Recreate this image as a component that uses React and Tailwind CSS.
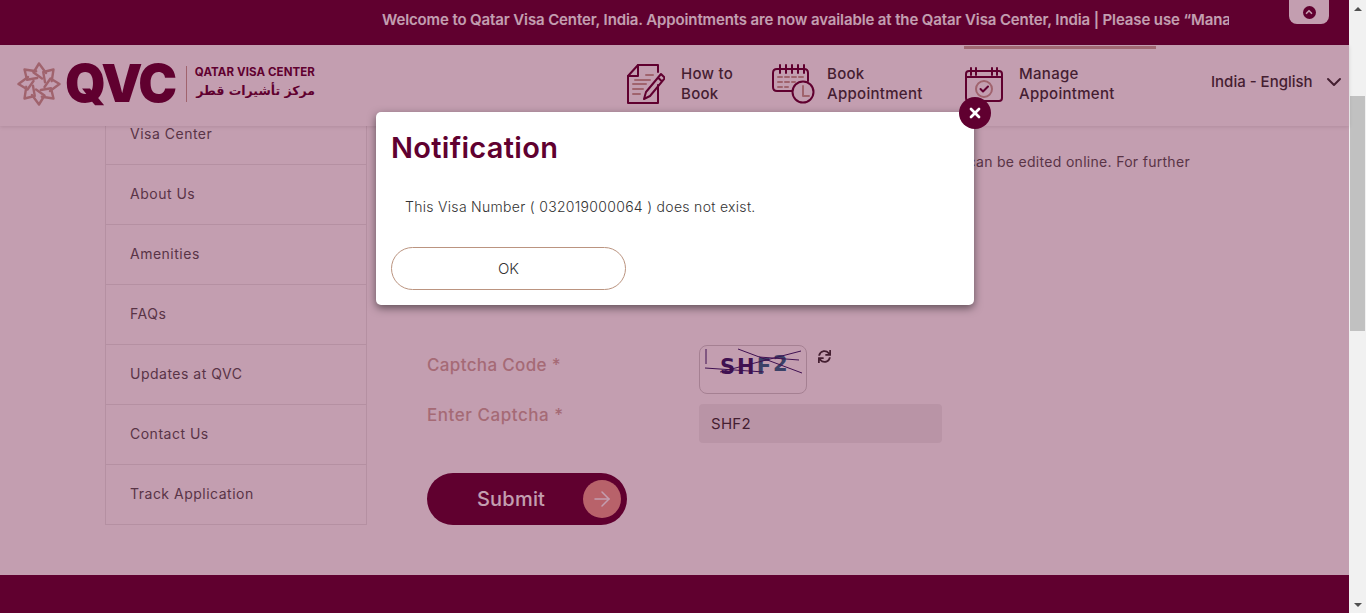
import { ChevronDown, ChevronUp, ArrowRight, X } from 'lucide-react'
import { FaSync } from 'react-icons/fa'

const font = { fontFamily: 'Inter, "Noto Sans", sans-serif' }

const sideLinks = ['About Us', 'Amenities', 'FAQs', 'Updates at QVC', 'Contact Us', 'Track Application']

function Rosette() {
  const arms = [0, 45, 90, 135, 180, 225, 270, 315]
  return (
    <svg width="44" height="44" viewBox="0 0 44 44" fill="none" stroke="#c7a094" strokeWidth="2.4" strokeLinejoin="round" strokeLinecap="round">
      {arms.map((a) => (
        <g key={a} transform={`rotate(${a} 22 22)`}>
          <path d="M22 1.5 L16.5 10.5 L25 16.5 M22 1.5 L29 11" />
        </g>
      ))}
    </svg>
  )
}

function DocIcon() {
  return (
    <svg width="38" height="40" viewBox="0 0 38 40" fill="none" strokeWidth="2" strokeLinecap="round" strokeLinejoin="round">
      <path d="M31 21 V39 H1 V12 L11 1 H31 V8" stroke="#600030" />
      <path d="M1 12 H11 V1" stroke="#600030" />
      <path d="M19 11 H26 M8 16 H23 M6 20 H19 M6 25 H16 M6 30 H13" stroke="#c7a094" />
      <path d="M34 10 L38 14 L23 32 L17 35 L19 28 Z M31 13.5 L35 17.5" stroke="#600030" />
    </svg>
  )
}

function CalendarClockIcon() {
  return (
    <svg width="44" height="40" viewBox="0 0 44 40" fill="none" strokeWidth="2" strokeLinecap="round" strokeLinejoin="round">
      <path d="M20 27 H5 Q1 27 1 23 V9 Q1 5 5 5 H32 Q36 5 36 9 V17" stroke="#600030" />
      <path d="M8 1 V9 M14 1 V9 M20 1 V9 M26 1 V9 M32 1 V9" stroke="#600030" />
      <path d="M6 13 H10 M13 13 H17 M20 13 H24 M27 13 H31 M6 18 H10 M13 18 H17 M20 18 H23 M6 23 H10 M13 23 H16" stroke="#c7a094" />
      <circle cx="31" cy="28" r="10.5" stroke="#600030" />
      <path d="M31 22 V32 H37" stroke="#c7a094" />
    </svg>
  )
}

function CalendarCheckIcon() {
  return (
    <svg width="38" height="35" viewBox="0 0 38 35" fill="none" strokeWidth="2" strokeLinecap="round" strokeLinejoin="round">
      <path d="M4 4 H34 Q37 4 37 7 V31 Q37 34 34 34 H4 Q1 34 1 31 V7 Q1 4 4 4 Z" stroke="#600030" />
      <path d="M1 10 H37 M6 1 V8 M11 1 V8 M27 1 V8 M32 1 V8" stroke="#600030" />
      <circle cx="19" cy="22" r="8" stroke="#c7a094" />
      <path d="M15.5 22 L18 24.5 L23 19.5" stroke="#600030" />
    </svg>
  )
}

function NavItem({ icon, line1, line2, active, width }) {
  return (
    <div className={`${width} h-[80px] mt-px flex items-center pb-[7px] border-t-[3px] ${active ? 'border-[#c7a89b]' : 'border-transparent'}`}>
      <div className="flex items-center">
        {icon}
        <div className="text-[15px] leading-5 font-medium tracking-[0.3px] text-[#333333]">
          <div>{line1}</div>
          <div>{line2}</div>
        </div>
      </div>
    </div>
  )
}

function Captcha() {
  return (
    <div className="relative w-[108px] h-[49px] border border-[#cfcfcf] rounded-lg overflow-hidden">
      <div className="pl-[20px] pt-[7px] text-[21px] leading-[28px] font-extrabold tracking-[2px] whitespace-nowrap" style={{ fontFamily: '"DejaVu Sans", sans-serif' }}>
        <span className="text-[#2a1a66]">SH</span>
        <span className="text-[#24698a]">F</span>
        <span className="inline-block -translate-y-[3px] text-[#24698a]">2</span>
      </div>
      <svg className="absolute inset-0" width="108" height="49" fill="none" stroke="#2a1a66" strokeWidth="1">
        <path d="M6 3 V18 M5 22 L64 26 M38 3 L102 27 M20 26 L101 5 M59 11 L99 14" />
      </svg>
    </div>
  )
}

export default function App() {
  return (
    <div className="h-[613px] flex overflow-hidden bg-white" style={font}>
      <div className="relative w-[1349px] h-full flex flex-col">
        {/* Announcement bar */}
        <div className="h-[45px] bg-[#600030] flex shrink-0">
          <div className="ml-[382px] w-[847px] h-[41px] flex items-center overflow-hidden">
            <span className="text-[15px] font-semibold text-white whitespace-nowrap tracking-[-0.12px]">
              Welcome to Qatar Visa Center, India. Appointments are now available at the Qatar Visa Center, India | Please use “Manage Appointment”
            </span>
          </div>
          <div className="ml-[60px] w-[40px] h-[24px] bg-white rounded-b-lg flex items-center justify-center">
            <span className="w-[13px] h-[13px] rounded-full bg-[#600030] flex items-center justify-center">
              <ChevronUp size={10} strokeWidth={4} className="text-white" />
            </span>
          </div>
        </div>

        {/* Header */}
        <div className="relative z-10 h-[81px] bg-white shadow-[0_1px_4px_rgba(0,0,0,0.12)] flex shrink-0">
          <div className="w-[625px] flex items-center pl-[17px] pb-[4px]">
            <Rosette />
            <span className="ml-[4px] text-[52px] leading-none font-black tracking-[-2.2px] text-[#600030]">QVC</span>
            <div className="ml-[11px] pl-[8px] border-l border-[#c7a094] h-[36px] flex flex-col justify-center">
              <div className="text-[11.5px] leading-[13px] font-bold text-[#600030] tracking-[0.1px] whitespace-nowrap">QATAR VISA CENTER</div>
              <div dir="rtl" className="text-[12.5px] leading-[23px] font-bold text-[#600030] whitespace-nowrap" style={{ fontFamily: '"DejaVu Sans", sans-serif' }}>مركز تأشيرات قطر</div>
            </div>
          </div>
          <NavItem width="w-[147px]" line1="How to" line2="Book" icon={<span className="ml-[2px] mr-[16px] flex"><DocIcon /></span>} />
          <NavItem width="w-[192px]" line1="Book" line2="Appointment" icon={<span className="mr-[11px] flex"><CalendarClockIcon /></span>} />
          <NavItem width="w-[192px]" active line1="Manage" line2="Appointment" icon={<span className="ml-px mr-[16px] flex"><CalendarCheckIcon /></span>} />
          <div className="ml-[55px] flex items-center pb-[7px] text-[15px] font-medium tracking-[0px] text-[#333333] whitespace-nowrap">
            India - English
            <ChevronDown size={24} strokeWidth={2} className="ml-[9px]" />
          </div>
        </div>

        {/* Page content */}
        <div className="flex-1 flex min-h-0 pl-[105px]">
          <div className="w-[262px] h-[399px] border-l border-r border-[#e8e8e8] shrink-0 text-[14px] tracking-[0.5px] text-[#555555]">
            <div className="h-[39px] border-b border-[#e8e8e8] pl-[24px] leading-[16px]">Visa Center</div>
            {sideLinks.map((l) => (
              <div key={l} className="h-[60px] border-b border-[#e8e8e8] pl-[24px] pb-[2px] flex items-center">{l}</div>
            ))}
          </div>
          <div className="flex-1 pl-[60px] flex flex-col">
            <div className="h-[219px] pt-[27px] pr-[159px] flex justify-end text-[14px] leading-[18px] tracking-[0.3px] text-[#555555] whitespace-nowrap">
              can be edited online. For further
            </div>
            <div className="flex">
              <div className="w-[272px] pt-[9px] text-[17px] leading-[22px] font-medium tracking-[0.35px] text-[#cfaba1]">Captcha Code *</div>
              <Captcha />
              <FaSync size={13} className="ml-[11px] mt-[5px] text-[#333333]" />
            </div>
            <div className="flex mt-[10px]">
              <div className="w-[272px] text-[17px] leading-[22px] font-medium tracking-[0.55px] text-[#cfaba1]">Enter Captcha *</div>
              <div className="w-[243px] h-[39px] rounded bg-[#efefef] px-[12px] pt-px flex items-center text-[15px] tracking-[0.3px] text-[#333333]">SHF2</div>
            </div>
            <button className="mt-[30px] w-[200px] h-[52px] rounded-full bg-[#600030] flex items-center pl-[50px] pr-[6px] text-white">
              <span className="text-[20px] font-medium tracking-[0.2px]">Submit</span>
              <span className="ml-auto w-[38px] h-[38px] rounded-full bg-[#ed9f8f] flex items-center justify-center">
                <ArrowRight size={24} strokeWidth={1.5} className="text-white" />
              </span>
            </button>
          </div>
        </div>

        {/* Footer */}
        <div className="h-[38px] bg-[#600030] shrink-0" />

        {/* Modal backdrop */}
        <div className="absolute inset-0 z-20 bg-[rgba(96,0,48,0.38)]">
          <div className="absolute left-[376px] top-[112px] w-[598px] h-[193px] bg-white rounded-[5px] shadow-[0_3px_9px_rgba(0,0,0,0.5)] px-[15px]">
            <button className="absolute -top-[15px] -right-[17px] w-[32px] h-[32px] rounded-full bg-[#600030] flex items-center justify-center">
              <X size={16} strokeWidth={4} className="text-white" />
            </button>
            <div className="pt-[17px] text-[29px] leading-[38px] font-semibold tracking-[0.3px] text-[#600030]">Notification</div>
            <div className="mt-[30px] pl-[14px] text-[14px] leading-[20px] font-light tracking-[0.3px] text-[#333333]">
              This Visa Number ( 032019000064 ) does not exist.
            </div>
            <button className="mt-[30px] w-[235px] h-[43px] rounded-full border border-[#bb9480] pt-px text-[15px] font-light text-[#333333]">OK</button>
          </div>
        </div>
      </div>

      {/* Scrollbar */}
      <div className="w-[17px] h-full bg-[#f1f1f1] flex flex-col items-center shrink-0">
        <div className="h-[17px] flex items-center justify-center">
          <span className="w-0 h-0 border-l-[4px] border-r-[4px] border-b-[4px] border-transparent border-b-[#505050]" />
        </div>
        <div className="mt-[79px] w-[15px] h-[235px] bg-[#c1c1c1]" />
        <div className="mt-auto h-[17px] flex items-center justify-center">
          <span className="w-0 h-0 border-l-[4px] border-r-[4px] border-t-[4px] border-transparent border-t-[#505050]" />
        </div>
      </div>
    </div>
  )
}
